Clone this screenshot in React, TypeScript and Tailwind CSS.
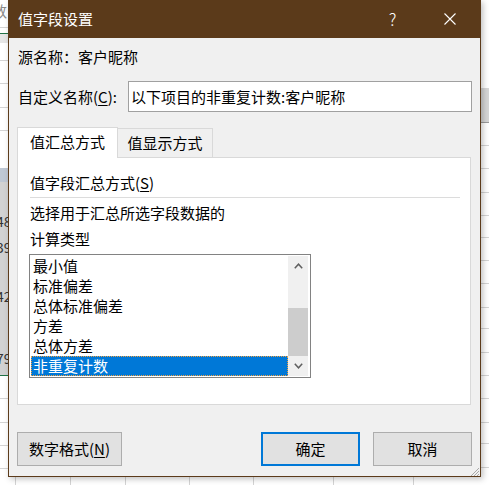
import React from 'react';

const items = ['最小值', '标准偏差', '总体标准偏差', '方差', '总体方差', '非重复计数'];

const rightLines = [145, 168, 192, 215, 237, 260, 283, 307, 328, 352, 375, 398, 422, 443, 467];

const Chevron = ({ up }: { up?: boolean }) => (
  <svg width="9" height="6" viewBox="0 0 9 6" fill="none">
    <path
      d={up ? 'M0.8 5.2 L4.5 1.2 L8.2 5.2' : 'M0.8 0.8 L4.5 4.8 L8.2 0.8'}
      stroke="#606060"
      strokeWidth="1.5"
    />
  </svg>
);

const Excel = () => (
  <div className="absolute inset-0 bg-white">
    {/* left strip */}
    <div className="absolute left-0 top-0 w-[8px] h-full overflow-hidden">
      <div className="absolute top-[1px] left-[-8px] text-[15px] leading-[20px] text-[#8a8a8a]">数</div>
      <div className="absolute top-[27px] w-full h-px bg-[#d4d4d4]" />
      <div className="absolute top-[33px] w-full h-px bg-[#217346]" />
      <div className="absolute top-[34px] w-full h-[9px] bg-[#e6e6e6]" />
      <div className="absolute top-[60px] w-full h-px bg-[#d4d4d4]" />
      <div className="absolute top-[83px] w-full h-px bg-[#d4d4d4]" />
      <div className="absolute top-[107px] w-full h-px bg-[#d4d4d4]" />
      <div className="absolute top-[130px] w-full h-px bg-[#d4d4d4]" />
      <div className="absolute top-[168px] w-full h-[207px] bg-[#d2d2d2]" />
      <div className="absolute top-[168px] w-full h-[14px] bg-[#bfc8d4]" />
      <div className="absolute top-[212px] left-[-4px] text-[14px] leading-[18px] text-[#333]">48</div>
      <div className="absolute top-[238px] left-[-4px] text-[14px] leading-[18px] text-[#333]">39</div>
      <div className="absolute top-[287px] left-[-4px] text-[14px] leading-[18px] text-[#333]">42</div>
      <div className="absolute top-[349px] left-[-4px] text-[14px] leading-[18px] text-[#333]">79</div>
      <div className="absolute top-[375px] w-full h-px bg-[#217346]" />
      <div className="absolute top-[398px] w-full h-px bg-[#d4d4d4]" />
      <div className="absolute top-[422px] w-full h-px bg-[#d4d4d4]" />
      <div className="absolute top-[445px] w-full h-px bg-[#d4d4d4]" />
      <div className="absolute top-[468px] w-full h-px bg-[#d4d4d4]" />
    </div>
    {/* right strip */}
    <div className="absolute right-0 top-0 w-[8px] h-full overflow-hidden">
      <div className="absolute top-[88px] w-full h-[34px] bg-[#d6d6d6]" />
      <div className="absolute top-[122px] w-full h-px bg-[#9a9a9a]" />
      {rightLines.map(y => (
        <div key={y} className="absolute w-full h-px bg-[#d4d4d4]" style={{ top: y }} />
      ))}
    </div>
    {/* bottom strip */}
    <div className="absolute left-0 bottom-0 w-full h-[8px]">
      {[15, 70, 125, 189, 253, 333, 413].map(x => (
        <div key={x} className="absolute top-0 w-px h-full bg-[#d4d4d4]" style={{ left: x }} />
      ))}
    </div>
  </div>
);

export default function App() {
  return (
    <div className="relative w-[489px] h-[485px] overflow-hidden font-['Noto_Sans_CJK_SC','Noto_Sans',sans-serif] text-[15px] text-black">
      <Excel />
      <div className="absolute left-[8px] top-0 w-[473px] h-[477px] flex flex-col bg-[#f0f0f0] border-x border-b border-[#5c3b1b] shadow-[2px_2px_6px_rgba(0,0,0,0.25)]">
        {/* title bar */}
        <div className="h-[38px] shrink-0 bg-[#5b3a1a] text-white flex items-center -mx-px">
          <span className="pl-[10px] leading-[20px]">值字段设置</span>
          <div className="ml-auto w-[57px] h-full flex items-center justify-center text-[17px] font-light">?</div>
          <div className="w-[57px] h-full flex items-center justify-center">
            <svg width="12" height="12" viewBox="0 0 12 12">
              <path d="M0.5 0.5 L11.5 11.5 M11.5 0.5 L0.5 11.5" stroke="white" strokeWidth="1.1" />
            </svg>
          </div>
          <div className="w-[3px]" />
        </div>

        <div className="flex-1 flex flex-col pl-[8px] pr-[8px]">
          <div className="mt-[9px] h-[20px] leading-[20px] pl-[1px]">源名称：客户昵称</div>

          <div className="mt-[14px] flex items-center h-[31px]">
            <span className="w-[111px] pl-[1px] leading-[20px]">
              自定义名称(<span className="underline underline-offset-2">C</span>):
            </span>
            <div className="flex-1 h-[31px] bg-white border border-[#a0a0a0] flex items-center pl-[2px] leading-[20px]">
              以下项目的非重复计数:客户昵称
            </div>
          </div>

          {/* tabs */}
          <div className="mt-[15px] h-[30px] flex items-end">
            <div className="relative z-10 w-[101px] h-[31px] mb-[-1px] bg-white border-x border-t border-[#d9d9d9] flex items-center justify-center pb-[2px] leading-[20px]">
              值汇总方式
            </div>
            <div className="w-[95px] h-[29px] bg-[#f0f0f0] border-r border-t border-[#d9d9d9] flex items-center justify-center pb-[1px] leading-[20px]">
              值显示方式
            </div>
          </div>

          <div className="w-[454px] h-[248px] bg-white border border-[#d9d9d9] flex flex-col pl-[11px]">
            <div className="mt-[15px] pl-[1px] h-[20px] leading-[20px]">
              值字段汇总方式(<span className="underline underline-offset-2">S</span>)
            </div>
            <div className="mt-[4px] ml-[1px] w-[430px] h-px bg-[#dcdcdc]" />
            <div className="mt-[5px] pl-[1px] h-[20px] leading-[20px]">选择用于汇总所选字段数据的</div>
            <div className="mt-[6px] pl-[1px] h-[20px] leading-[20px]">计算类型</div>

            <div className="mt-[5px] w-[282px] h-[124px] border border-[#828282] flex p-px">
              <div className="w-[257px] flex flex-col">
                {items.map((it, i) => {
                  const sel = i === items.length - 1;
                  return (
                    <div
                      key={it}
                      className={
                        sel
                          ? 'h-[20px] leading-[18px] pl-[1px] bg-[#0078d7] text-white border border-dotted border-[#f0a040]'
                          : 'h-[20px] leading-[20px] pl-[2px]'
                      }
                    >
                      {it}
                    </div>
                  );
                })}
              </div>
              <div className="w-[20px] bg-[#f0f0f0] flex flex-col">
                <div className="h-[20px] flex items-center justify-center">
                  <Chevron up />
                </div>
                <div className="h-[32px]" />
                <div className="h-[48px] bg-[#cdcdcd]" />
                <div className="h-[20px] flex items-center justify-center">
                  <Chevron />
                </div>
              </div>
            </div>
          </div>

          {/* buttons */}
          <div className="mt-[27px] flex h-[34px]">
            <div className="w-[105px] h-full bg-[#e1e1e1] border border-[#adadad] flex items-center justify-center leading-[20px]">
              数字格式(<span className="underline underline-offset-2">N</span>)
            </div>
            <div className="ml-auto w-[99px] h-full bg-[#e1e1e1] border-2 border-[#0078d7] flex items-center justify-center leading-[20px]">
              确定
            </div>
            <div className="ml-[13px] w-[99px] h-full bg-[#e1e1e1] border border-[#adadad] flex items-center justify-center leading-[20px]">
              取消
            </div>
          </div>

          <div className="flex-1 flex items-end justify-end -mr-[8px]">
            <svg width="11" height="11" viewBox="0 0 11 11" className="mb-px">
              <path d="M10 2 L2 10 M10 5 L5 10 M10 8 L8 10" stroke="#a8a8a8" strokeWidth="1" />
            </svg>
          </div>
        </div>
      </div>
    </div>
  );
}
